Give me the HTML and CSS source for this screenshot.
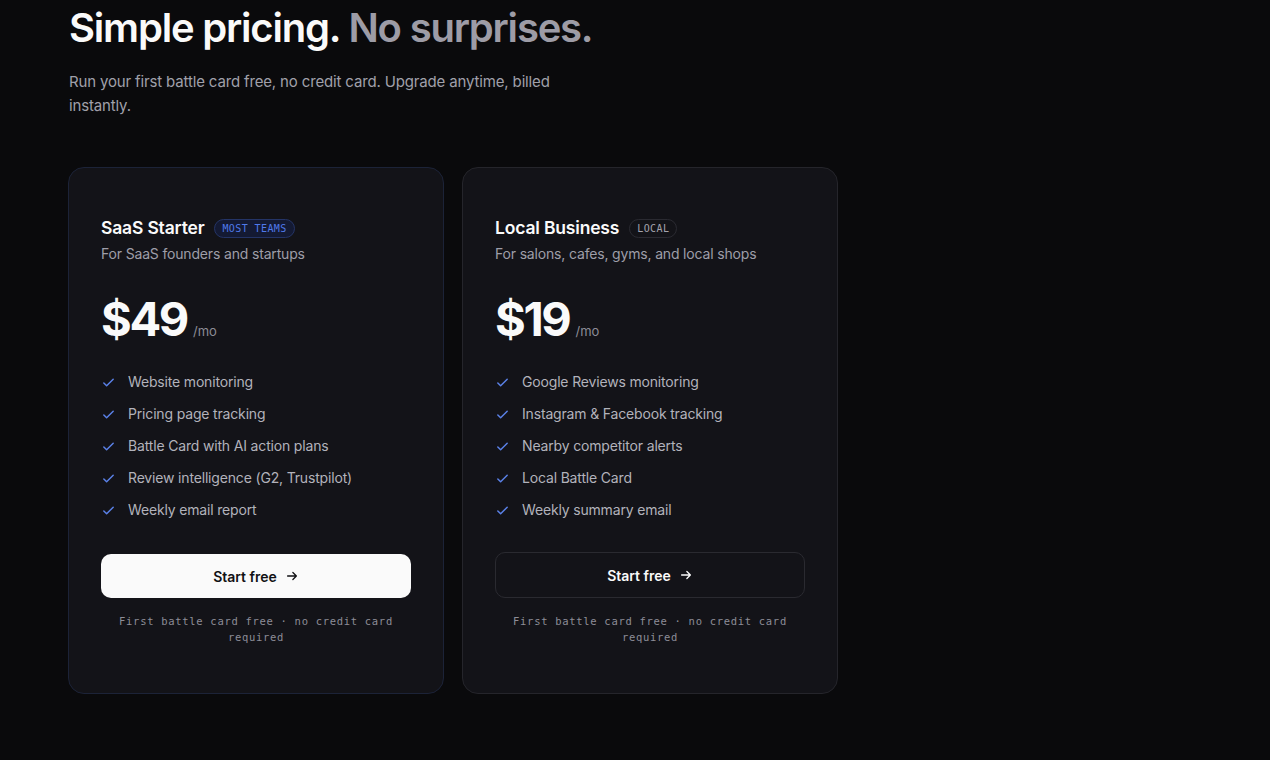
FILE: index.html
```html
<!DOCTYPE html>
<html lang="en">
  <head>
    <meta charset="UTF-8" />
    <meta name="viewport" content="width=device-width, initial-scale=1.0" />
    <title>Pricing</title>
    <link rel="stylesheet" href="styles.css">
  </head>
  <body>
    <section class="pricing">
      <h1>Simple pricing. <span class="muted">No surprises.</span></h1>
      <p class="lead">Run your first battle card free, no credit card. Upgrade anytime, billed instantly.</p>

      <div class="plans">
        <div class="plan featured">
          <div class="plan-head">
            <h3>SaaS Starter</h3>
            <span class="badge badge-blue">Most teams</span>
          </div>
          <p class="plan-sub">For SaaS founders and startups</p>
          <div class="price"><span class="amount">$49</span><span class="per">/mo</span></div>
          <ul class="features">
            <li><svg viewBox="0 0 16 16"><path d="M3 8.5l3 3 7-7" /></svg>Website monitoring</li>
            <li><svg viewBox="0 0 16 16"><path d="M3 8.5l3 3 7-7" /></svg>Pricing page tracking</li>
            <li><svg viewBox="0 0 16 16"><path d="M3 8.5l3 3 7-7" /></svg>Battle Card with AI action plans</li>
            <li><svg viewBox="0 0 16 16"><path d="M3 8.5l3 3 7-7" /></svg>Review intelligence (G2, Trustpilot)</li>
            <li><svg viewBox="0 0 16 16"><path d="M3 8.5l3 3 7-7" /></svg>Weekly email report</li>
          </ul>
          <button class="btn btn-light">Start free <svg viewBox="0 0 16 16"><path d="M3 8h10M9 4l4 4-4 4" /></svg></button>
          <p class="note">First battle card free · no credit card required</p>
        </div>

        <div class="plan">
          <div class="plan-head">
            <h3>Local Business</h3>
            <span class="badge">Local</span>
          </div>
          <p class="plan-sub">For salons, cafes, gyms, and local shops</p>
          <div class="price"><span class="amount">$19</span><span class="per">/mo</span></div>
          <ul class="features">
            <li><svg viewBox="0 0 16 16"><path d="M3 8.5l3 3 7-7" /></svg>Google Reviews monitoring</li>
            <li><svg viewBox="0 0 16 16"><path d="M3 8.5l3 3 7-7" /></svg>Instagram &amp; Facebook tracking</li>
            <li><svg viewBox="0 0 16 16"><path d="M3 8.5l3 3 7-7" /></svg>Nearby competitor alerts</li>
            <li><svg viewBox="0 0 16 16"><path d="M3 8.5l3 3 7-7" /></svg>Local Battle Card</li>
            <li><svg viewBox="0 0 16 16"><path d="M3 8.5l3 3 7-7" /></svg>Weekly summary email</li>
          </ul>
          <button class="btn btn-dark">Start free <svg viewBox="0 0 16 16"><path d="M3 8h10M9 4l4 4-4 4" /></svg></button>
          <p class="note">First battle card free · no credit card required</p>
        </div>
      </div>
    </section>
  </body>
</html>
```

FILE: styles.css
```css
* {
  box-sizing: border-box;
  margin: 0;
  padding: 0;
  font-family: Inter, "Noto Sans", sans-serif;
}

body {
  background: #0a0a0c;
  color: #fafafa;
  min-height: 100vh;
}

.pricing {
  padding: 6px 69px 40px;
}

h1 {
  font-size: 40px;
  line-height: 44px;
  font-weight: 600;
  letter-spacing: -0.03em;
  color: #fafafa;
}

h1 .muted {
  color: #9d9ca6;
}

.lead {
  margin-top: 20px;
  max-width: 500px;
  font-size: 15px;
  line-height: 24px;
  letter-spacing: -0.01em;
  color: #a0a0aa;
}

.plans {
  display: flex;
  gap: 18px;
  margin-top: 49px;
  margin-left: -1px;
}

.plan {
  width: 376px;
  padding: 48px 32px;
  background: #131318;
  border: 1px solid #25252b;
  border-radius: 16px;
}

.plan.featured {
  border-color: #1c2338;
}

.plan-head {
  display: flex;
  align-items: center;
  gap: 10px;
}

.plan-head h3 {
  font-size: 17.5px;
  line-height: 24px;
  font-weight: 600;
  letter-spacing: -0.01em;
}

.badge {
  font-family: "DejaVu Sans Mono", "Liberation Mono", monospace;
  font-size: 10px;
  text-transform: uppercase;
  letter-spacing: 0.04em;
  line-height: 17px;
  padding: 0 7px;
  border-radius: 999px;
  border: 1px solid #2a2a31;
  color: #a3a3ad;
}

.badge-blue {
  background: #141a33;
  border-color: #243466;
  color: #4f79ea;
}

.plan-sub {
  margin-top: 4px;
  font-size: 14px;
  line-height: 20px;
  letter-spacing: -0.012em;
  color: #9e9ea8;
}

.price {
  display: flex;
  align-items: baseline;
  gap: 6px;
  margin-top: 31px;
}

.amount {
  font-size: 47px;
  line-height: 48px;
  font-weight: 700;
  letter-spacing: -0.05em;
}

.per {
  font-size: 13px;
  color: #8c8c96;
}

.features {
  list-style: none;
  margin-top: 29px;
  display: flex;
  flex-direction: column;
  gap: 12px;
}

.features li {
  display: flex;
  align-items: center;
  gap: 12px;
  font-size: 14px;
  line-height: 20px;
  letter-spacing: -0.012em;
  color: #b2b2bb;
}

.features svg {
  width: 15px;
  height: 15px;
  fill: none;
  stroke: #5a80e6;
  stroke-width: 1.6;
  stroke-linecap: round;
  stroke-linejoin: round;
}

.btn {
  display: flex;
  align-items: center;
  justify-content: center;
  gap: 8px;
  width: 100%;
  height: 44px;
  margin-top: 34px;
  border-radius: 10px;
  font-size: 14px;
  font-weight: 600;
  cursor: pointer;
}

.btn svg {
  width: 14px;
  height: 14px;
  fill: none;
  stroke: currentColor;
  stroke-width: 1.5;
  stroke-linecap: round;
  stroke-linejoin: round;
}

.btn-light {
  background: #fafafa;
  color: #111114;
  border: none;
}

.btn-dark {
  background: transparent;
  color: #fafafa;
  border: 1px solid #2a2a30;
  margin-top: 32px;
  height: 46px;
}

.note {
  margin-top: 15px;
  text-align: center;
  font-family: "DejaVu Sans Mono", "Liberation Mono", monospace;
  font-size: 10.5px;
  line-height: 16px;
  letter-spacing: 0.7px;
  color: #8d8d97;
  padding: 0 10px;
}
```
